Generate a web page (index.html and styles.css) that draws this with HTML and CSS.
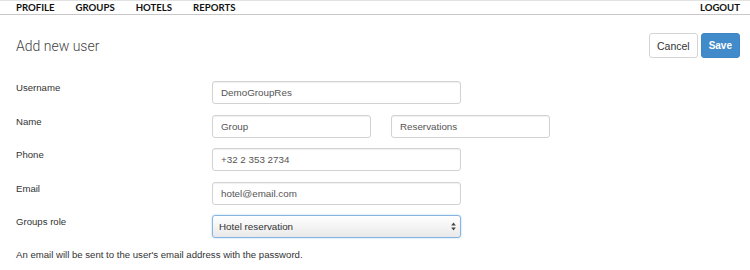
FILE: index.html
```html
<!DOCTYPE html>
<html lang="en">
<head>
    <meta charset="UTF-8">
    <meta name="viewport" content="width=device-width, initial-scale=1.0">
    <title>Add new user</title>
    <link rel="stylesheet" href="styles.css">
</head>
<body>
    <!-- Top menu -->
    <div class="menu">
        <div class="menu-links">
            <a href="#">PROFILE</a>
            <a href="#">GROUPS</a>
            <a href="#">HOTELS</a>
            <a href="#">REPORTS</a>
        </div>
        <a href="#">LOGOUT</a>
    </div>

    <div class="header">
        <h1>Add new user</h1>
        <div class="actions">
            <button class="btn">Cancel</button>
            <button class="btn btn-save">Save</button>
        </div>
    </div>

    <form class="user-form">
        <div class="row">
            <label for="username">Username</label>
            <div class="fields">
                <input type="text" id="username" value="DemoGroupRes" class="wide">
            </div>
        </div>
        <div class="row">
            <label for="firstname">Name</label>
            <div class="fields">
                <input type="text" id="firstname" value="Group" class="half">
                <input type="text" id="lastname" value="Reservations" class="half">
            </div>
        </div>
        <div class="row">
            <label for="phone">Phone</label>
            <div class="fields">
                <input type="text" id="phone" value="+32 2 353 2734" class="wide">
            </div>
        </div>
        <div class="row">
            <label for="email">Email</label>
            <div class="fields">
                <input type="email" id="email" value="hotel@email.com" class="wide">
            </div>
        </div>
        <div class="row">
            <label for="role">Groups role</label>
            <div class="fields">
                <div class="select-box">
                    <select id="role">
                        <option>Hotel reservation</option>
                    </select>
                    <svg class="arrows" width="5" height="9" viewBox="0 0 5 9">
                        <path d="M2.5 0.5 L4.8 3.5 L0.2 3.5 Z" fill="#444"/>
                        <path d="M2.5 8.5 L4.8 5.5 L0.2 5.5 Z" fill="#444"/>
                    </svg>
                </div>
            </div>
        </div>
        <p class="note">An email will be sent to the user's email address with the password.</p>
    </form>
</body>
</html>
```

FILE: styles.css
```css
body {
    margin: 0;
    font-family: "Liberation Sans", Arial, sans-serif;
    font-size: 9.6px;
    color: #333;
    background: #fff;
}

/* Menu */
.menu {
    display: flex;
    justify-content: space-between;
    height: 13px;
    line-height: 13px;
    padding: 0 10px 0 16px;
    border-top: 1px solid #e2e2e2;
    border-bottom: 1px solid #c8c8c8;
}
.menu a {
    font-family: Lato, "Liberation Sans", sans-serif;
    font-weight: 700;
    font-size: 9.6px;
    color: #111;
    text-decoration: none;
}
.menu-links {
    display: flex;
    gap: 21px;
}

/* Header */
.header {
    display: flex;
    justify-content: space-between;
    align-items: center;
    margin-top: 18px;
    padding: 0 10px 0 16px;
}
h1 {
    margin: 0;
    font-family: Roboto, "Liberation Sans", sans-serif;
    font-weight: 300;
    font-size: 14px;
    color: #444;
}
.actions {
    display: flex;
    gap: 3px;
}
.btn {
    height: 25px;
    padding: 0 7px;
    font-family: "Liberation Sans", Arial, sans-serif;
    font-size: 10.5px;
    color: #333;
    background: #fff;
    border: 1px solid #d4d4d4;
    border-radius: 3px;
}
.btn-save {
    padding: 0 7px;
    font-size: 10px;
    font-weight: 700;
    color: #fff;
    background: #428bca;
    border-color: #3f86c4;
}

/* Form */
.user-form {
    margin-top: 23px;
    padding-left: 16px;
}
.row {
    display: flex;
    margin-bottom: 10.5px;
}
.row label {
    width: 196px;
    padding-top: 1px;
    line-height: 12px;
    color: #333;
}
.fields {
    display: flex;
    gap: 20px;
}
input {
    box-sizing: border-box;
    height: 23px;
    padding: 0 8px;
    font-family: "Liberation Sans", Arial, sans-serif;
    font-size: 9.8px;
    color: #555;
    border: 1px solid #d2d2d2;
    border-radius: 3px;
    box-shadow: inset 0 1px 1px rgba(0, 0, 0, 0.06);
}
.wide {
    width: 249px;
}
.half {
    width: 159px;
}

.select-box {
    position: relative;
    width: 249px;
}
select {
    box-sizing: border-box;
    width: 100%;
    height: 23px;
    padding: 0 6px;
    font-family: "Liberation Sans", Arial, sans-serif;
    font-size: 9.8px;
    color: #333;
    -webkit-appearance: none;
    appearance: none;
    background: linear-gradient(#ffffff, #e9e9e9);
    border: 1px solid #86b4e0;
    border-radius: 3px;
    box-shadow: 0 0 2px rgba(102, 175, 233, 0.6);
}
.arrows {
    position: absolute;
    right: 5px;
    top: 7px;
}

.note {
    margin: 11px 0 0;
    line-height: 12px;
    color: #333;
}
```
